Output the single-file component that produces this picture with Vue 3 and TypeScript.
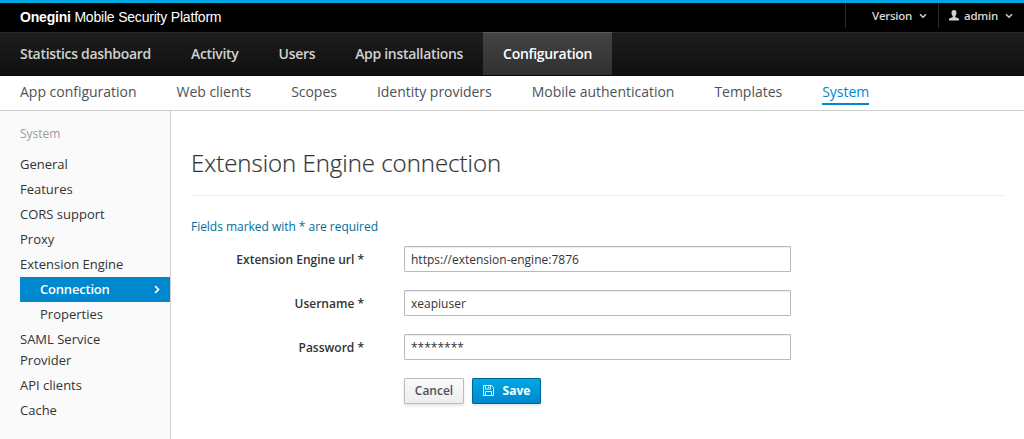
<script setup lang="ts">
import { ref } from 'vue'

interface SideItem {
  label: string
  nested?: boolean
  active?: boolean
}

const primary: string[] = ['Statistics dashboard', 'Activity', 'Users', 'App installations', 'Configuration']
const secondary: string[] = [
  'App configuration',
  'Web clients',
  'Scopes',
  'Identity providers',
  'Mobile authentication',
  'Templates',
  'System',
]
const side: SideItem[] = [
  { label: 'General' },
  { label: 'Features' },
  { label: 'CORS support' },
  { label: 'Proxy' },
  { label: 'Extension Engine' },
  { label: 'Connection', nested: true, active: true },
  { label: 'Properties', nested: true },
  { label: 'SAML Service Provider' },
  { label: 'API clients' },
  { label: 'Cache' },
]
const fields = ref([
  { id: 'url', label: 'Extension Engine url *', value: 'https://extension-engine:7876' },
  { id: 'username', label: 'Username *', value: 'xeapiuser' },
  { id: 'password', label: 'Password *', value: '********' },
])
</script>

<template>
  <div class="page">
    <header class="topbar">
      <div class="brand"><b>Onegini</b> Mobile Security Platform</div>
      <div class="utility">
        <a class="util version">
          <span>Version</span>
          <svg class="caret" width="8" height="6" viewBox="0 0 8 6"><path d="M1 1.2 4 4.2 7 1.2" /></svg>
        </a>
        <a class="util user">
          <svg class="person" width="10" height="11" viewBox="0 0 10 11">
            <path d="M5 0C3.3 0 2.4 1.2 2.5 3c.1 1.500.6 2.400 1.200 3v1.200L.6 8.300Q0 8.600 0 9.500V10.500H10V9.500Q10 8.600 9.400 8.300L6.300 7.200V6c.6-.6 1.100-1.500 1.200-3C7.600 1.200 6.700 0 5 0Z" />
          </svg>
          <span>admin</span>
          <svg class="caret" width="8" height="6" viewBox="0 0 8 6"><path d="M1 1.2 4 4.2 7 1.2" /></svg>
        </a>
      </div>
    </header>
    <nav class="primary">
      <a v-for="item in primary" :key="item" :class="{ active: item === 'Configuration' }">{{ item }}</a>
    </nav>
    <nav class="secondary">
      <a v-for="item in secondary" :key="item" :class="{ active: item === 'System' }">{{ item }}</a>
    </nav>
    <div class="body">
      <aside class="sidebar">
        <h2>System</h2>
        <a v-for="item in side" :key="item.label" :class="{ nested: item.nested, active: item.active }">
          <span>{{ item.label }}</span>
          <svg v-if="item.active" width="6" height="9" viewBox="0 0 6 9"><path d="M1.200 1.200 4.500 4.500 1.200 7.800" /></svg>
        </a>
      </aside>
      <main class="content">
        <h1>Extension Engine connection</h1>
        <p class="hint">Fields marked with * are required</p>
        <form @submit.prevent>
          <div v-for="field in fields" :key="field.id" class="row">
            <label :for="field.id">{{ field.label }}</label>
            <input :id="field.id" v-model="field.value" type="text" />
          </div>
          <div class="actions">
            <button type="button" class="btn cancel">Cancel</button>
            <button type="submit" class="btn save">
              <svg width="11" height="11" viewBox="0 0 11 11">
                <path d="M.5.5H8.500L10.500 2.500V10.500H.5ZM2.500.5V4H7.500V.5M5.500 1.500V3M2.500 10.500V6.500H8.500V10.500" />
              </svg>
              <span>Save</span>
            </button>
          </div>
        </form>
      </main>
    </div>
  </div>
</template>

<style>
body {
  margin: 0;
  overflow: hidden;
}
</style>

<style scoped>
.page {
  box-sizing: border-box;
  width: 1024px;
  height: 439px;
  display: flex;
  flex-direction: column;
  background: #fff;
  color: #333;
  font-family: "Open Sans", sans-serif;
  font-size: 12px;
}
.topbar {
  box-sizing: border-box;
  height: 32px;
  border-top: 3px solid #00a8e1;
  background: #000;
  display: flex;
  justify-content: space-between;
}
.brand {
  padding-left: 20px;
  color: #fff;
  font: 14px/28px "Liberation Sans", sans-serif;
  letter-spacing: -0.2px;
}
.utility {
  display: flex;
  height: 25px;
}
.util {
  box-sizing: border-box;
  display: flex;
  align-items: center;
  border-left: 1px solid #2b2b2b;
  color: #d6d6d6;
  font-size: 11.5px;
  font-weight: 600;
  line-height: 25px;
}
.util span {
  letter-spacing: -0.28px;
}
.version {
  width: 93px;
  padding-left: 26px;
}
.user {
  width: 86px;
  padding-left: 10px;
}
.person {
  margin-right: 5px;
  fill: #d1d1d1;
}
.caret {
  margin: 0 0 0 7px;
  fill: none;
  stroke: #d1d1d1;
  stroke-width: 1.5;
}
.primary {
  box-sizing: border-box;
  height: 44px;
  border-top: 1px solid #2b2b2b;
  border-bottom: 1px solid #080808;
  display: flex;
  background: linear-gradient(#1d1d1d, #101010);
}
.primary a {
  margin-top: -1px;
  padding: 0 20px;
  border-top: 1px solid transparent;
  color: #d1d1d1;
  font-size: 14px;
  font-weight: 600;
  letter-spacing: -0.31px;
  line-height: 42px;
}
.primary .active {
  border-top-color: #5c5c5c;
  background: linear-gradient(#444, #303030);
  color: #fff;
}
.secondary {
  box-sizing: border-box;
  height: 35px;
  padding-left: 20px;
  border-bottom: 1px solid #cecece;
  display: flex;
  align-items: flex-start;
  gap: 40px;
}
.secondary a {
  height: 27px;
  color: #4d5258;
  font-size: 14px;
  letter-spacing: -0.02px;
  line-height: 32px;
}
.secondary .active {
  border-bottom: 2px solid #0088ce;
  color: #0088ce;
}
.body {
  flex: 1;
  display: flex;
}
.sidebar {
  box-sizing: border-box;
  width: 171px;
  padding-left: 20px;
  border-right: 1px solid #cecece;
  background: #fafafa;
}
.sidebar h2 {
  margin: 13px 0 8px;
  color: #9c9c9c;
  font-size: 12px;
  font-weight: 400;
  line-height: 20px;
}
.sidebar a {
  display: flex;
  align-items: center;
  justify-content: space-between;
  padding: 2px 20px 2px 0;
  font-size: 13px;
  line-height: 21px;
}
.sidebar .nested {
  padding-left: 20px;
}
.sidebar .active {
  padding-right: 10px;
  background: #0088ce;
  color: #fff;
  font-weight: 600;
  letter-spacing: -0.2px;
}
.sidebar svg {
  fill: none;
  stroke: #fff;
  stroke-width: 1.700;
}
.content {
  flex: 1;
  padding: 0 20px;
}
h1 {
  margin: 32px 0 0;
  padding-bottom: 13px;
  border-bottom: 1px solid #ededed;
  font-size: 24px;
  font-weight: 300;
  letter-spacing: -0.02px;
  line-height: 39px;
  -webkit-text-stroke: 0.2px currentColor;
}
.hint {
  margin: 21px 0 9px;
  color: #006e9c;
  letter-spacing: -0.03px;
  line-height: 20px;
}
.row {
  display: flex;
  margin-bottom: 18px;
  line-height: 26px;
}
.row label {
  height: 25px;
  padding-top: 1px;
  width: 173px;
  margin-right: 40px;
  text-align: right;
  font-weight: 600;
}
.row input {
  box-sizing: border-box;
  width: 387px;
  height: 26px;
  padding: 0 6px;
  border: 1px solid #bababa;
  border-radius: 1px;
  box-shadow: inset 0 1px 1px rgba(3, 3, 3, 0.075);
  background: #fff;
  color: #333;
  font: 12px "Open Sans", sans-serif;
}
.actions {
  display: flex;
  gap: 8px;
  padding-left: 213px;
}
.btn {
  box-sizing: border-box;
  height: 26px;
  padding: 0;
  border: 1px solid #bbb;
  border-radius: 1px;
  box-shadow: 0 2px 3px rgba(3, 3, 3, 0.1);
  display: flex;
  align-items: center;
  justify-content: center;
  font: 600 12px/22px "Open Sans", sans-serif;
}
.cancel {
  width: 60px;
  background: linear-gradient(#fafafa, #ededed);
  color: #4d5258;
}
.save {
  width: 69px;
  gap: 9px;
  border-color: #00659c;
  background: linear-gradient(#00a8e1, #0088ce);
  color: #fff;
  font-weight: 700;
}
.save svg {
  margin-bottom: 1px;
  fill: none;
  stroke: #fff;
  stroke-width: 0.9;
}
</style>
